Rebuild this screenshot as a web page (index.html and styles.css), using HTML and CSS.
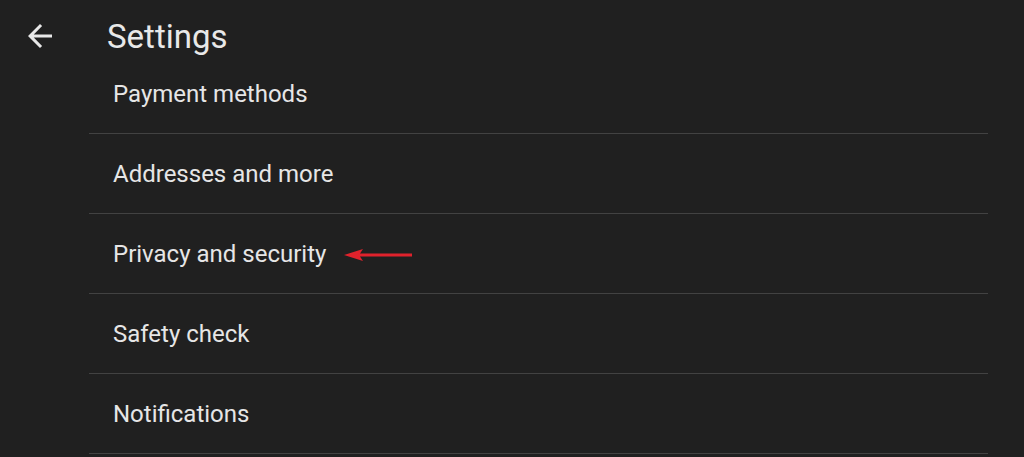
FILE: index.html
```html
<!DOCTYPE html>
<html>
<head>
<meta charset="utf-8">
<link rel="stylesheet" href="styles.css">
</head>
<body>
<div class="app">
  <header class="topbar">
    <svg class="back" viewBox="0 0 24 24" width="36" height="36"><path fill="#e8e8e8" d="M20 11H7.83l5.59-5.59L12 4l-8 8 8 8 1.41-1.41L7.83 13H20v-2z"/></svg>
    <h1 class="title">Settings</h1>
  </header>
  <ul class="list">
    <li class="row">Payment methods</li>
    <li class="row">Addresses and more</li>
    <li class="row">Privacy and security
      <svg class="pointer" viewBox="0 0 68 14" width="68" height="14"><path fill="#e0222c" d="M0 7 L19 1 L16 5.5 H68 V8.5 H16 L19 13 Z"/></svg>
    </li>
    <li class="row">Safety check</li>
    <li class="row">Notifications</li>
  </ul>
</div>
</body>
</html>
```
FILE: styles.css
```css
* { box-sizing: border-box; }
html, body {
  margin: 0;
  padding: 0;
  background: #202020;
  height: 100%;
  overflow: hidden;
}
body {
  font-family: Roboto, "Liberation Sans", sans-serif;
  color: #e6e6e6;
}
.topbar {
  height: 54px;
  display: flex;
  align-items: flex-start;
}
.back {
  margin: 18px 0 0 22px;
  flex: none;
}
.title {
  margin: 17px 0 0 49px;
  font-size: 33px;
  line-height: 40px;
  font-weight: 400;
  color: #e8e8e8;
}
.list {
  list-style: none;
  margin: 0 36px 0 89px;
  padding: 0;
}
.row {
  height: 80px;
  display: flex;
  align-items: center;
  padding-left: 24px;
  padding-top: 1px;
  font-size: 24px;
  border-bottom: 1.5px solid #424242;
}
.pointer {
  margin-left: 18px;
  margin-top: 2px;
}
```
